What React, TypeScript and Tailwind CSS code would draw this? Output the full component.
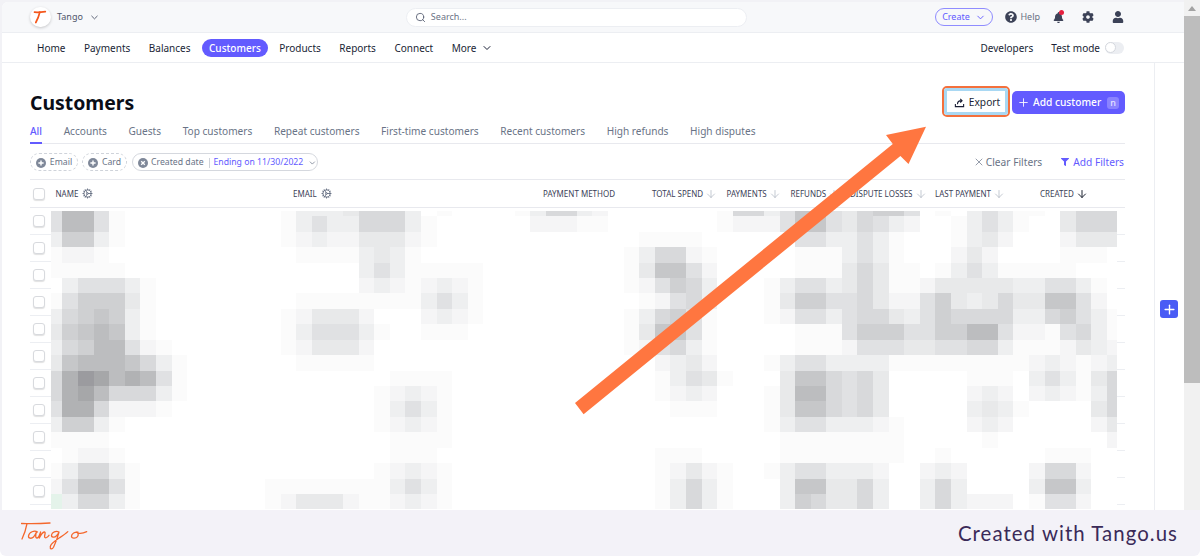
import React from "react";
import { Search, ChevronDown, X, ArrowDown, Plus, Cog } from "lucide-react";
import { FaQuestionCircle, FaBell, FaCog, FaUser, FaFilter } from "react-icons/fa";

const SHADES: Record<string, string> = {
  "1": "#fbfbfb", "2": "#f5f5f6", "3": "#eeeff0", "4": "#e8e9ea", "5": "#e0e1e3", "6": "#d8d9db",
  "7": "#cfd0d2", "8": "#c6c7c9", "9": "#bcbdbf", a: "#b1b2b4", b: "#a6a7a9", c: "#9b9b9f", g: "#e4f3ea",
};

// each row: [first column, shades from that column on]
const MOSAIC: [number, string][][] = [
  [[-1, "59951"], [14, "133346663 1"], [29, "136632"], [42, "16635885"], [50, "46775 1"], [58, "35311"], [64, "4666"]],
  [[-1, "59951"], [14, "1353366631"], [30, "22211"], [42, "12225885"], [50, "465320"], [57, "13531"], [64, "4666"]],
  [[-1, "37731"], [14, "1232244421"], [37, "1111"], [47, "55335310"], [57, "13420"], [64, "2444"]],
  [[-1, "1221"], [15, "11113431"], [36, "136621"], [47, "111353100"], [57, "2420"], [64, "111"]],
  [[-1, "111110"], [19, "35311111"], [36, "148852"], [47, "111464110135311111"]],
  [[0, "355531"], [19, "23212321"], [36, "125763"], [45, "1355346411244444335531"]],
  [[-1, "1577741"], [15, "111111113531"], [37, "12563"], [45, "1477556422574346448852"]],
  [[-1, "3678731"], [14, "124442"], [23, "2321"], [36, "136751"], [45, "12553566435766663367531"]],
  [[-1, "4789831"], [14, "1355531"], [23, "111"], [36, "148851"], [47, "111577755779952215631"]],
  [[-1, "36799521"], [14, "124442"], [36, "125631"], [47, "111255544556631112432"]],
  [[-1, "489998631"], [15, "11111"], [38, "2342"], [45, "13553333111111111232123"]],
  [[-1, "6acb9a9510"], [21, "1111"], [38, "13541"], [46, "48865640"], [58, "111"], [62, "353146"]],
  [[-1, "6ab9666310"], [20, "12321"], [38, "1232"], [45, "14996564"], [58, "232"], [62, "232136"]],
  [[-1, "5aa62221"], [20, "13531"], [39, "111"], [45, "14886564"], [58, "3431"], [66, "46"]],
  [[-1, "37731"], [20, "12321"], [45, "135533321"], [58, "232"], [66, "24"]],
  [[-1, "1111"], [21, "1111"], [46, "11111111"], [59, "1"], [67, "2"]],
  [[0, "1221"], [21, "111"], [38, "111"], [46, "11111111"], [56, "1"], [63, "111"]],
  [[-1, "136631"], [20, "12321"], [38, "12421"], [45, "1355333200232"], [62, "2662"]],
  [[-1, "258851"], [13, "111111113531"], [38, "13631"], [46, "38844630"], [55, "363"], [62, "3883"]],
  [[-1, "g36631"], [13, "124442112321"], [38, "13631"], [46, "37644630"], [55, "363222"], [62, "1552"]],
];

function Mosaic() {
  const rects: React.ReactNode[] = [];
  MOSAIC.forEach((row, r) => {
    const top = r === 0 ? 0 : 5.3 + 15.43 * (r - 1);
    const h = r === 0 ? 5.3 : 15.43;
    row.forEach(([start, digits]) => {
      [...digits].forEach((d, i) => {
        const fill = SHADES[d];
        if (!fill) return;
        const x = 62.4 + 15.59 * (start + i) - 51;
        const left = Math.max(0, x);
        rects.push(
          <rect key={`${r}-${start}-${i}`} x={left} y={top} width={x + 15.59 - left} height={h} fill={fill} />
        );
      });
    });
  });
  return (
    <svg className="absolute left-[51px] top-[210.7px]" width="1066" height="299.3" shapeRendering="crispEdges">
      <rect width="1066" height="300" fill="#fff" />
      {rects}
    </svg>
  );
}

const Check = () => (
  <span className="ml-[3px] block w-[12px] h-[12px] rounded-[3px] bg-white border border-[#d8dade] shadow-[0_1px_1px_rgba(0,0,0,0.12)]" />
);

const PlusDot = () => (
  <svg width="10" height="10" viewBox="0 0 10 10" className="shrink-0">
    <circle cx="5" cy="5" r="5" fill="#7f8899" />
    <path d="M5 2.4v5.2M2.4 5h5.2" stroke="#fff" strokeWidth="1.4" />
  </svg>
);

const Sort = ({ dark }: { dark?: boolean }) => (
  <ArrowDown size={12} strokeWidth={dark ? 2 : 1.4} className={dark ? "text-[#1f2433] ml-[2px]" : "text-[#aeb4c0] ml-[2px]"} />
);

const Col = ({ w, children }: { w: string; children: React.ReactNode }) => (
  <div className={`${w} flex items-center shrink-0 whitespace-nowrap`}>{children}</div>
);

export default function App() {
  const nav = ["Home", "Payments", "Balances", "Customers", "Products", "Reports", "Connect"];
  const tabs = ["Accounts", "Guests", "Top customers", "Repeat customers", "First-time customers", "Recent customers", "High refunds", "High disputes"];
  return (
    <div className="relative w-[1200px] h-[556px] overflow-hidden flex flex-col bg-white font-['Noto_Sans',sans-serif] text-[10px] text-[#1a1f36] whitespace-nowrap">
      <div className="h-[510px] flex shrink-0 overflow-hidden">
        <div className="w-[1184px] shrink-0 flex flex-col pl-[2px] pt-[2px] bg-[#f2f2f6]">
          <div className="flex-1 flex flex-col bg-white rounded-tl-[6px] overflow-hidden min-h-0">
            {/* top bar */}
            <div className="h-[31px] shrink-0 flex items-center bg-[#f7f8fa] border-b border-[#eceef2] pl-[28px] pr-[60px]">
              <span className="w-[21px] h-[20px] rounded-full bg-white shadow-[0_1px_3px_rgba(0,0,0,0.2)] flex items-center justify-center">
                <svg width="14" height="14" viewBox="0 0 14 14" fill="none" stroke="#f4571c" strokeWidth="1.7" strokeLinecap="round">
                  <path d="M1.5 2.2c3 .3 7 0 10.8-.5" />
                  <path d="M6.8 2.2C6 5.5 4.8 9 2.8 12.5" />
                </svg>
              </span>
              <span className="ml-[6px] text-[9px] text-[#4f566b]">Tango</span>
              <ChevronDown size={11} className="ml-[6px] text-[#4f566b]" />
              <div className="ml-[306px] w-[341px] h-[19px] rounded-full bg-white border border-[#eceef2] flex items-center pl-[8px] text-[9px] text-[#6b7385]">
                <Search size={11} strokeWidth={1.8} className="text-[#4f566b]" />
                <span className="ml-[5px]">Search...</span>
              </div>
              <div className="ml-[188px] w-[59px] h-[18px] rounded-full border border-[#8f8cff] flex items-center justify-center text-[9px] text-[#635bff]">
                Create
                <ChevronDown size={11} className="ml-[5px]" />
              </div>
              <FaQuestionCircle size={12} className="ml-[12px] text-[#3c4257]" />
              <span className="ml-[3px] text-[9px] text-[#6b7385]">Help</span>
              <span className="relative ml-[13px] flex">
                <FaBell size={11} className="text-[#3c4257]" />
                <span className="absolute -top-[2px] left-[6px] w-[5px] h-[5px] rounded-full bg-[#e5203f]" />
              </span>
              <FaCog size={12} className="ml-[18px] text-[#3c4257]" />
              <FaUser size={12} className="ml-[18px] text-[#3c4257]" />
            </div>
            {/* nav */}
            <div className="h-[30px] shrink-0 flex items-center border-b border-[#eceef2] pl-[28px] pr-[60px] text-[10px]">
              <div className="flex items-center gap-[4.5px]">
                {nav.map((n) => (
                  <span
                    key={n}
                    className={
                      n === "Customers"
                        ? "h-[18px] px-[7px] pt-[1px] rounded-full bg-[#635bff] text-white flex items-center font-medium"
                        : "h-[18px] px-[7px] pt-[1px] flex items-center text-[#1a1f36]"
                    }
                  >
                    {n}
                  </span>
                ))}
                <span className="h-[18px] px-[7px] pt-[1px] flex items-center">
                  More
                  <ChevronDown size={12} className="ml-[5px]" />
                </span>
              </div>
              <div className="ml-auto flex items-center">
                <span className="pt-[1px]">Developers</span>
                <span className="ml-[18px] pt-[1px]">Test mode</span>
                <span className="ml-[5px] w-[19px] h-[12px] rounded-full bg-[#eceef2] flex items-center">
                  <span className="w-[11px] h-[11px] rounded-full bg-white border border-[#d5d8de]" />
                </span>
              </div>
            </div>
            {/* content */}
            <div className="flex-1 flex min-h-0">
              <div className="w-[1152px] shrink-0 pl-[28px] pr-[29px] pt-[27px] flex flex-col">
                <div className="h-[24px] flex items-center justify-between shrink-0">
                  <h1 className="text-[19.4px] leading-[24px] font-bold text-[#0a0d17] mt-[2px]">Customers</h1>
                  <div className="flex items-center">
                    <div className="w-[60px] h-[24px] pt-[1px] rounded-[4px] bg-white flex items-center justify-center text-[10.2px] text-[#1a1f36]">
                      <svg width="11" height="11" viewBox="0 0 12 12" fill="none" stroke="#1a1f36" strokeWidth="1.2">
                        <path d="M1.5 7.5v3h9v-3" />
                        <path d="M3.8 8c0-2.4 1.6-4 4.4-4M6.8 2l2 2-2 2" />
                      </svg>
                      <span className="ml-[4px]">Export</span>
                    </div>
                    <div className="ml-[5px] w-[113px] h-[23px] pt-[1px] rounded-[5px] bg-[#635bff] flex items-center pl-[5px] text-white font-medium text-[10.2px]">
                      <Plus size={13} strokeWidth={1.6} />
                      <span className="ml-[3px]">Add customer</span>
                      <span className="ml-auto mr-[6px] w-[12px] h-[12px] rounded-[3px] bg-[#8a83ff] text-[#e6e4ff] text-[9px] flex items-center justify-center">n</span>
                    </div>
                  </div>
                </div>
                <div className="h-[30px] shrink-0 border-b border-[#e8e9ee] pt-[10px] flex items-start gap-[21.6px] text-[#697386] text-[10.1px]">
                  <span className="h-[20px] border-b-2 border-[#635bff] text-[#635bff] font-medium">All</span>
                  {tabs.map((t) => (
                    <span key={t}>{t}</span>
                  ))}
                </div>
                <div className="h-[36px] shrink-0 border-b border-[#e8e9ee] flex items-center text-[8.7px] text-[#697386]">
                  <span className="h-[18px] w-[48px] pt-[2px] rounded-full border border-dashed border-[#cfd3da] flex items-center justify-center gap-[4px]">
                    <PlusDot />
                    Email
                  </span>
                  <span className="ml-[4px] h-[18px] w-[45px] pt-[2px] rounded-full border border-dashed border-[#cfd3da] flex items-center justify-center gap-[4px]">
                    <PlusDot />
                    Card
                  </span>
                  <span className="ml-[5px] h-[18px] w-[186px] pt-[2px] rounded-full border border-[#d5d8de] flex items-center pl-[5px]">
                    <svg width="10" height="10" viewBox="0 0 10 10" className="shrink-0">
                      <circle cx="5" cy="5" r="5" fill="#7f8899" />
                      <path d="M3.2 3.2l3.6 3.6M6.8 3.2l-3.6 3.6" stroke="#fff" strokeWidth="1.3" />
                    </svg>
                    <span className="ml-[3px]">Created date</span>
                    <span className="ml-[5px] h-[10px] w-px bg-[#cfd3da]" />
                    <span className="ml-[4px] text-[#635bff]">Ending on 11/30/2022</span>
                    <ChevronDown size={10} className="ml-[5px]" />
                  </span>
                  <span className="ml-auto pt-[2px] flex items-center text-[10.2px] text-[#697386]">
                    <X size={12} strokeWidth={1.4} />
                    <span className="ml-[1px]">Clear Filters</span>
                  </span>
                  <span className="ml-[19px] mr-[1px] pt-[2px] flex items-center text-[10.2px] text-[#635bff]">
                    <FaFilter size={8} />
                    <span className="ml-[4px]">Add Filters</span>
                  </span>
                </div>
                {/* table head */}
                <div className="h-[28px] shrink-0 border-b border-[#e8e9ee] flex items-center text-[8px] text-[#3c4257] uppercase">
                  <div className="w-[25.5px] shrink-0"><Check /></div>
                  <Col w="w-[237.5px]">Name<Cog size={11} className="ml-[4px] text-[#697386]" /></Col>
                  <Col w="w-[250px]">Email<Cog size={11} className="ml-[4px] text-[#697386]" /></Col>
                  <Col w="w-[109px]">Payment method</Col>
                  <Col w="w-[74.5px]">Total spend<Sort /></Col>
                  <Col w="w-[64px]">Payments<Sort /></Col>
                  <Col w="w-[59.5px]">Refunds<Sort /></Col>
                  <Col w="w-[85px]">Dispute losses<Sort /></Col>
                  <Col w="w-[105px]">Last payment<Sort /></Col>
                  <Col w="w-[80px]">Created<Sort dark /></Col>
                </div>
                {Array.from({ length: 11 }).map((_, i) => (
                  <div key={i} className="h-[27px] shrink-0 border-b border-[#eceef2] flex items-center">
                    <Check />
                  </div>
                ))}
              </div>
              <div className="flex-1 border-l border-[#eceef2] flex justify-center pt-[237px] pr-[1px]">
                <span className="w-[18px] h-[18px] rounded-[3px] bg-[#4a5cf5] flex items-center justify-center shrink-0">
                  <Plus size={15} strokeWidth={2.2} className="text-white" />
                </span>
              </div>
            </div>
          </div>
        </div>
        {/* scrollbar */}
        <div className="w-[16px] shrink-0 bg-[#f1f1f1] flex flex-col">
          <div className="h-[16px] flex items-center justify-center">
            <span className="w-0 h-0 border-x-[4px] border-x-transparent border-b-[5px] border-b-[#a3a3a3]" />
          </div>
          <div className="h-[367px] bg-[#bdbdbd]" />
        </div>
      </div>
      {/* footer */}
      <div className="h-[46px] shrink-0 flex items-center justify-between pl-[21px] pr-[22px] bg-[#f3f2f8] rounded-b-[6px]">
        <svg width="68" height="32" viewBox="0 0 68 32" fill="none" stroke="#f4672c" strokeWidth="1.3" strokeLinecap="round" strokeLinejoin="round" className="mt-[9px]">
          <path d="M0.5 1.5c9 .4 19 .2 28.5-.5" />
          <path d="M6 1.700C5 7 3 13 1 17" />
          <path d="M16.500 10c-3-2-8.500 0-9 4-.3 2.500 3 3 5 1 1.400-1.400 3-5 3-5-.8 2-1.500 6 .5 6 1.700 0 2.600-3.200 3.600-6-.5 2-1 4-1.300 6 1-2 3-5.600 5-6 1.500-.3.5 2.500.3 4-.2 1.500.6 2.200 2 1.500 1-.6 1.800-1.400 2.400-2.200" />
          <path d="M38 10c-3-1.500-7 0-7.500 3-.3 2.500 3 3 5 .8 1-1 2.500-3.600 2.500-3.600-1 4-3 10-5.500 15-1.500 2.700-3.600 2-3.200-.6.4-3 5-6 9.500-9 3-2 6-4 8-6" />
          <path d="M57 10.200c-3-.5-6.500 1.300-6.500 4 0 2.500 4.500 2.500 6 .5 1.200-1.700.8-4.500-.8-4.500 1 1.800 5.500 1.500 10-.5" />
        </svg>
        <span className="font-['Lato',sans-serif] text-[20.4px] tracking-[1.05px] text-[#3a2a58]">Created with Tango.us</span>
      </div>

      {/* overlays */}
      <Mosaic />
      <div className="absolute left-[942px] top-[86px] w-[67.5px] h-[31px] rounded-[5px] border-2 border-[#f4703c] pointer-events-none">
        <div className="w-full h-full rounded-[3px] border-[3px] border-[#a9d8f3]" />
      </div>
      <svg className="absolute left-0 top-0 pointer-events-none" width="1200" height="556">
        <polygon points="926,126.7 908.5,164 900.4,156 583.6,414.3 575,403 892.8,144 886,135" fill="#ff7640" />
      </svg>
    </div>
  );
}
